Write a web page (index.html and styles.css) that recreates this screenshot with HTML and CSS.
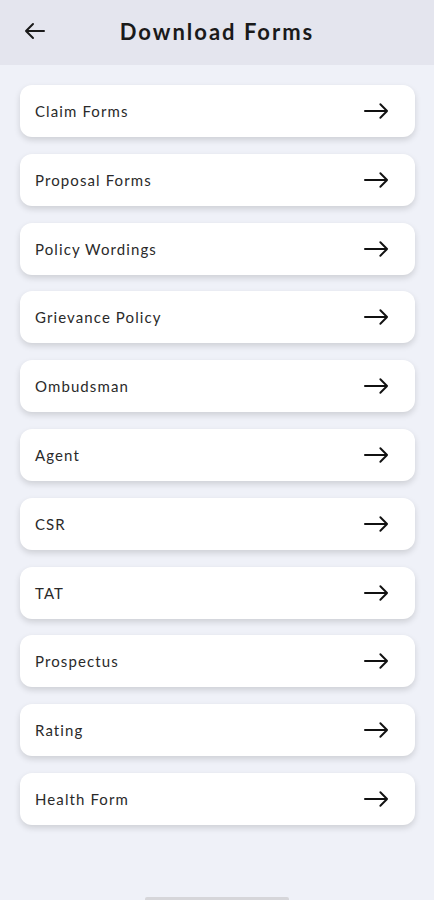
FILE: index.html
```html
<!DOCTYPE html>
<html lang="en">
<head>
    <meta charset="UTF-8">
    <meta name="viewport" content="width=device-width, initial-scale=1.0">
    <title>Download Forms</title>
    <link rel="stylesheet" href="styles.css">
</head>
<body>
    <header class="top-bar">
        <a class="back" href="#">
            <svg width="22" height="18" viewBox="0 0 22 18" fill="none" stroke="#1a1a1a" stroke-width="2" stroke-linecap="round" stroke-linejoin="round">
                <path d="M20 9H2M9 2L2 9L9 16"/>
            </svg>
        </a>
        <h1>Download Forms</h1>
    </header>

    <main class="form-list">
        <a class="form-item" href="#"><span>Claim Forms</span><svg class="arrow" viewBox="0 0 26 18"><path d="M1 9H24M17 2L24 9L17 16"/></svg></a>
        <a class="form-item" href="#"><span>Proposal Forms</span><svg class="arrow" viewBox="0 0 26 18"><path d="M1 9H24M17 2L24 9L17 16"/></svg></a>
        <a class="form-item" href="#"><span>Policy Wordings</span><svg class="arrow" viewBox="0 0 26 18"><path d="M1 9H24M17 2L24 9L17 16"/></svg></a>
        <a class="form-item" href="#"><span>Grievance Policy</span><svg class="arrow" viewBox="0 0 26 18"><path d="M1 9H24M17 2L24 9L17 16"/></svg></a>
        <a class="form-item" href="#"><span>Ombudsman</span><svg class="arrow" viewBox="0 0 26 18"><path d="M1 9H24M17 2L24 9L17 16"/></svg></a>
        <a class="form-item" href="#"><span>Agent</span><svg class="arrow" viewBox="0 0 26 18"><path d="M1 9H24M17 2L24 9L17 16"/></svg></a>
        <a class="form-item" href="#"><span>CSR</span><svg class="arrow" viewBox="0 0 26 18"><path d="M1 9H24M17 2L24 9L17 16"/></svg></a>
        <a class="form-item" href="#"><span>TAT</span><svg class="arrow" viewBox="0 0 26 18"><path d="M1 9H24M17 2L24 9L17 16"/></svg></a>
        <a class="form-item" href="#"><span>Prospectus</span><svg class="arrow" viewBox="0 0 26 18"><path d="M1 9H24M17 2L24 9L17 16"/></svg></a>
        <a class="form-item" href="#"><span>Rating</span><svg class="arrow" viewBox="0 0 26 18"><path d="M1 9H24M17 2L24 9L17 16"/></svg></a>
        <a class="form-item" href="#"><span>Health Form</span><svg class="arrow" viewBox="0 0 26 18"><path d="M1 9H24M17 2L24 9L17 16"/></svg></a>
    </main>

    <div class="home-indicator"></div>
</body>
</html>
```

FILE: styles.css
```css
/* Reset and font */
* {
    margin: 0;
    padding: 0;
    box-sizing: border-box;
    font-family: Lato, "Noto Sans", sans-serif;
}

body {
    background-color: #eff1f8;
    color: #1a1a1a;
    height: 900px;
    overflow: hidden;
    position: relative;
}

/* Header */
.top-bar {
    height: 65px;
    background-color: #e4e5ee;
    display: flex;
    align-items: center;
    padding-left: 24px;
}

.back {
    display: flex;
    width: 22px;
    margin-top: -3px;
}

.top-bar h1 {
    flex: 1;
    text-align: center;
    font-size: 22px;
    font-weight: 700;
    letter-spacing: 2px;
    margin-right: 46px;
    margin-top: -2px;
}

/* List of forms */
.form-list {
    display: flex;
    flex-direction: column;
    gap: 16.8px;
    padding: 20px 19px 0 20px;
}

.form-item {
    height: 52px;
    background-color: #fff;
    border-radius: 12px;
    box-shadow: 0 3px 6px rgba(0, 0, 0, 0.14);
    display: flex;
    align-items: center;
    justify-content: space-between;
    padding: 0 26px 0 15px;
    text-decoration: none;
    color: #2a2a2a;
    font-size: 15px;
    letter-spacing: 1.1px;
}

.arrow {
    width: 25px;
    height: 18px;
    fill: none;
    stroke: #111;
    stroke-width: 2;
    stroke-linecap: round;
    stroke-linejoin: round;
}

.home-indicator {
    position: absolute;
    left: 145px;
    bottom: 0;
    width: 144px;
    height: 3px;
    background-color: #d6d6da;
    border-radius: 2px 2px 0 0;
}
```
